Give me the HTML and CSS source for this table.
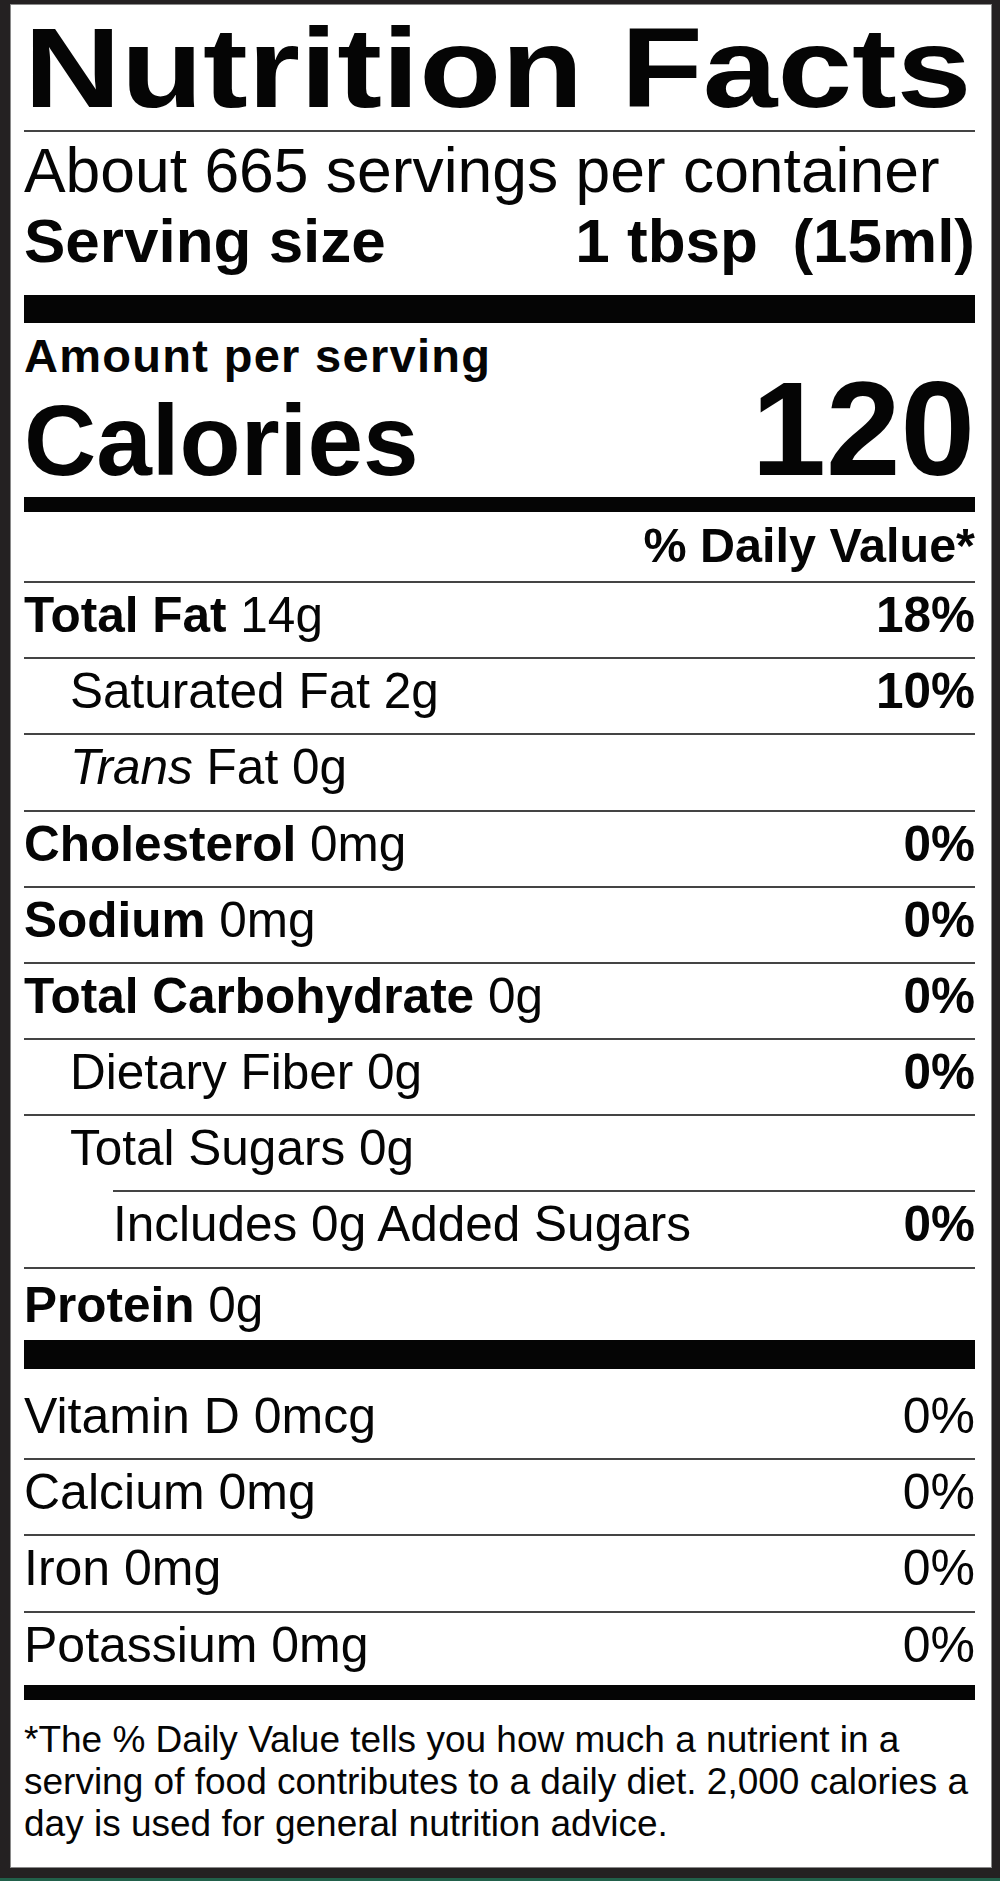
FILE: index.html
```html
<!DOCTYPE html>
<html lang="en">
<head>
<meta charset="utf-8">
<title>Nutrition Facts</title>
<link rel="stylesheet" href="styles.css">
</head>
<body>
<div class="frame">
  <section class="label">
    <h1 class="title"><span class="title-text">Nutrition Facts</span></h1>
    <div class="servings-block">
      <div class="servings">About 665 servings per container</div>
      <div class="serving-size"><span>Serving size</span><span class="pre">1 tbsp  (15ml)</span></div>
    </div>
    <div class="bar bar-lg"></div>
    <div class="amount">Amount per serving</div>
    <div class="calories"><span class="cal-label">Calories</span><span class="cal-num">120</span></div>
    <div class="bar bar-md"></div>
    <div class="dv-head">% Daily Value*</div>

    <div class="row"><span><b>Total Fat</b> 14g</span><b>18%</b></div>
    <div class="row sub"><span class="name">Saturated Fat 2g</span><b>10%</b></div>
    <div class="row sub"><span class="name"><i>Trans</i> Fat 0g</span></div>
    <div class="row"><span><b>Cholesterol</b> 0mg</span><b>0%</b></div>
    <div class="row"><span><b>Sodium</b> 0mg</span><b>0%</b></div>
    <div class="row"><span><b>Total Carbohydrate</b> 0g</span><b>0%</b></div>
    <div class="row sub"><span class="name">Dietary Fiber 0g</span><b>0%</b></div>
    <div class="row sub"><span class="name">Total Sugars 0g</span></div>
    <div class="row sub2"><span>Includes 0g Added Sugars</span><b>0%</b></div>
    <div class="row protein"><span><b>Protein</b> 0g</span></div>
    <div class="bar bar-lg2"></div>

    <div class="vrow first"><span>Vitamin D 0mcg</span><span>0%</span></div>
    <div class="vrow"><span>Calcium 0mg</span><span>0%</span></div>
    <div class="vrow"><span>Iron 0mg</span><span>0%</span></div>
    <div class="vrow last"><span>Potassium 0mg</span><span>0%</span></div>
    <div class="bar bar-md"></div>

    <p class="footnote">*The % Daily Value tells you how much a nutrient in a<br>serving of food contributes to a daily diet. 2,000 calories a<br>day is used for general nutrition advice.</p>
  </section>
  <div class="green-strip"></div>
</div>
</body>
</html>
```

FILE: styles.css
```css
html, body {
  margin: 0;
  padding: 0;
}

body {
  background: #242122;
  font-family: "Liberation Sans", Arial, Helvetica, sans-serif;
  color: #050505;
}

.frame {
  width: 1000px;
  height: 1881px;
  display: flex;
  flex-direction: column;
}

.label {
  box-sizing: border-box;
  margin: 5px 9px 0 11px;
  height: 1862px;
  padding: 0 16px 0 13px;
  background: #ffffff;
  box-shadow: 0 0 0 1px #8a8a8a;
}

.title {
  margin: 0;
  height: 125px;
  font-size: 114px;
  line-height: 125px;
  font-weight: bold;
  white-space: nowrap;
  border-bottom: 2px solid #444;
}

.title-text {
  display: inline-block;
  transform: scaleX(1.178);
  transform-origin: 0 50%;
}

.servings-block {
  padding: 3.5px 0 19.5px;
}

.servings {
  font-size: 62.4px;
  line-height: 70px;
  white-space: nowrap;
}

.serving-size {
  display: flex;
  justify-content: space-between;
  font-size: 62px;
  line-height: 70px;
  font-weight: bold;
  white-space: nowrap;
}

.pre {
  white-space: pre;
}

.bar {
  background: #050505;
}

.bar-lg {
  height: 28px;
}

.bar-lg2 {
  height: 29px;
}

.bar-md {
  height: 15px;
}

.amount {
  padding-top: 9.7px;
  font-size: 47px;
  line-height: 46px;
  font-weight: bold;
  letter-spacing: 1.3px;
}

.calories {
  display: flex;
  justify-content: space-between;
  align-items: baseline;
  height: 118.3px;
  font-weight: bold;
}

.cal-label {
  font-size: 100px;
  line-height: 100px;
}

.cal-num {
  font-size: 134px;
  line-height: 100px;
}

.dv-head {
  height: 69px;
  font-size: 48.5px;
  line-height: 67px;
  font-weight: bold;
  text-align: right;
}

.row {
  display: flex;
  justify-content: space-between;
  align-items: flex-start;
  height: 74.2px;
  border-top: 2px solid #444;
  font-size: 49.5px;
  line-height: 64px;
  white-space: nowrap;
}

.row.sub .name {
  padding-left: 46px;
}

.row.sub2 {
  margin-left: 89px;
}

.row.protein {
  height: 71.2px;
  line-height: 72px;
}

.vrow {
  display: flex;
  justify-content: space-between;
  align-items: flex-start;
  height: 74.5px;
  border-top: 2px solid #444;
  font-size: 50px;
  line-height: 64px;
  white-space: nowrap;
}

.vrow.first {
  border-top: 0;
  padding-top: 15px;
  height: 74px;
}

.vrow.last {
  height: 72px;
}

.footnote {
  margin: 0;
  padding: 19px 0 0;
  font-size: 37px;
  line-height: 42px;
  white-space: nowrap;
}

.green-strip {
  margin-top: 11px;
  height: 3px;
  background: #21604a;
}
```
